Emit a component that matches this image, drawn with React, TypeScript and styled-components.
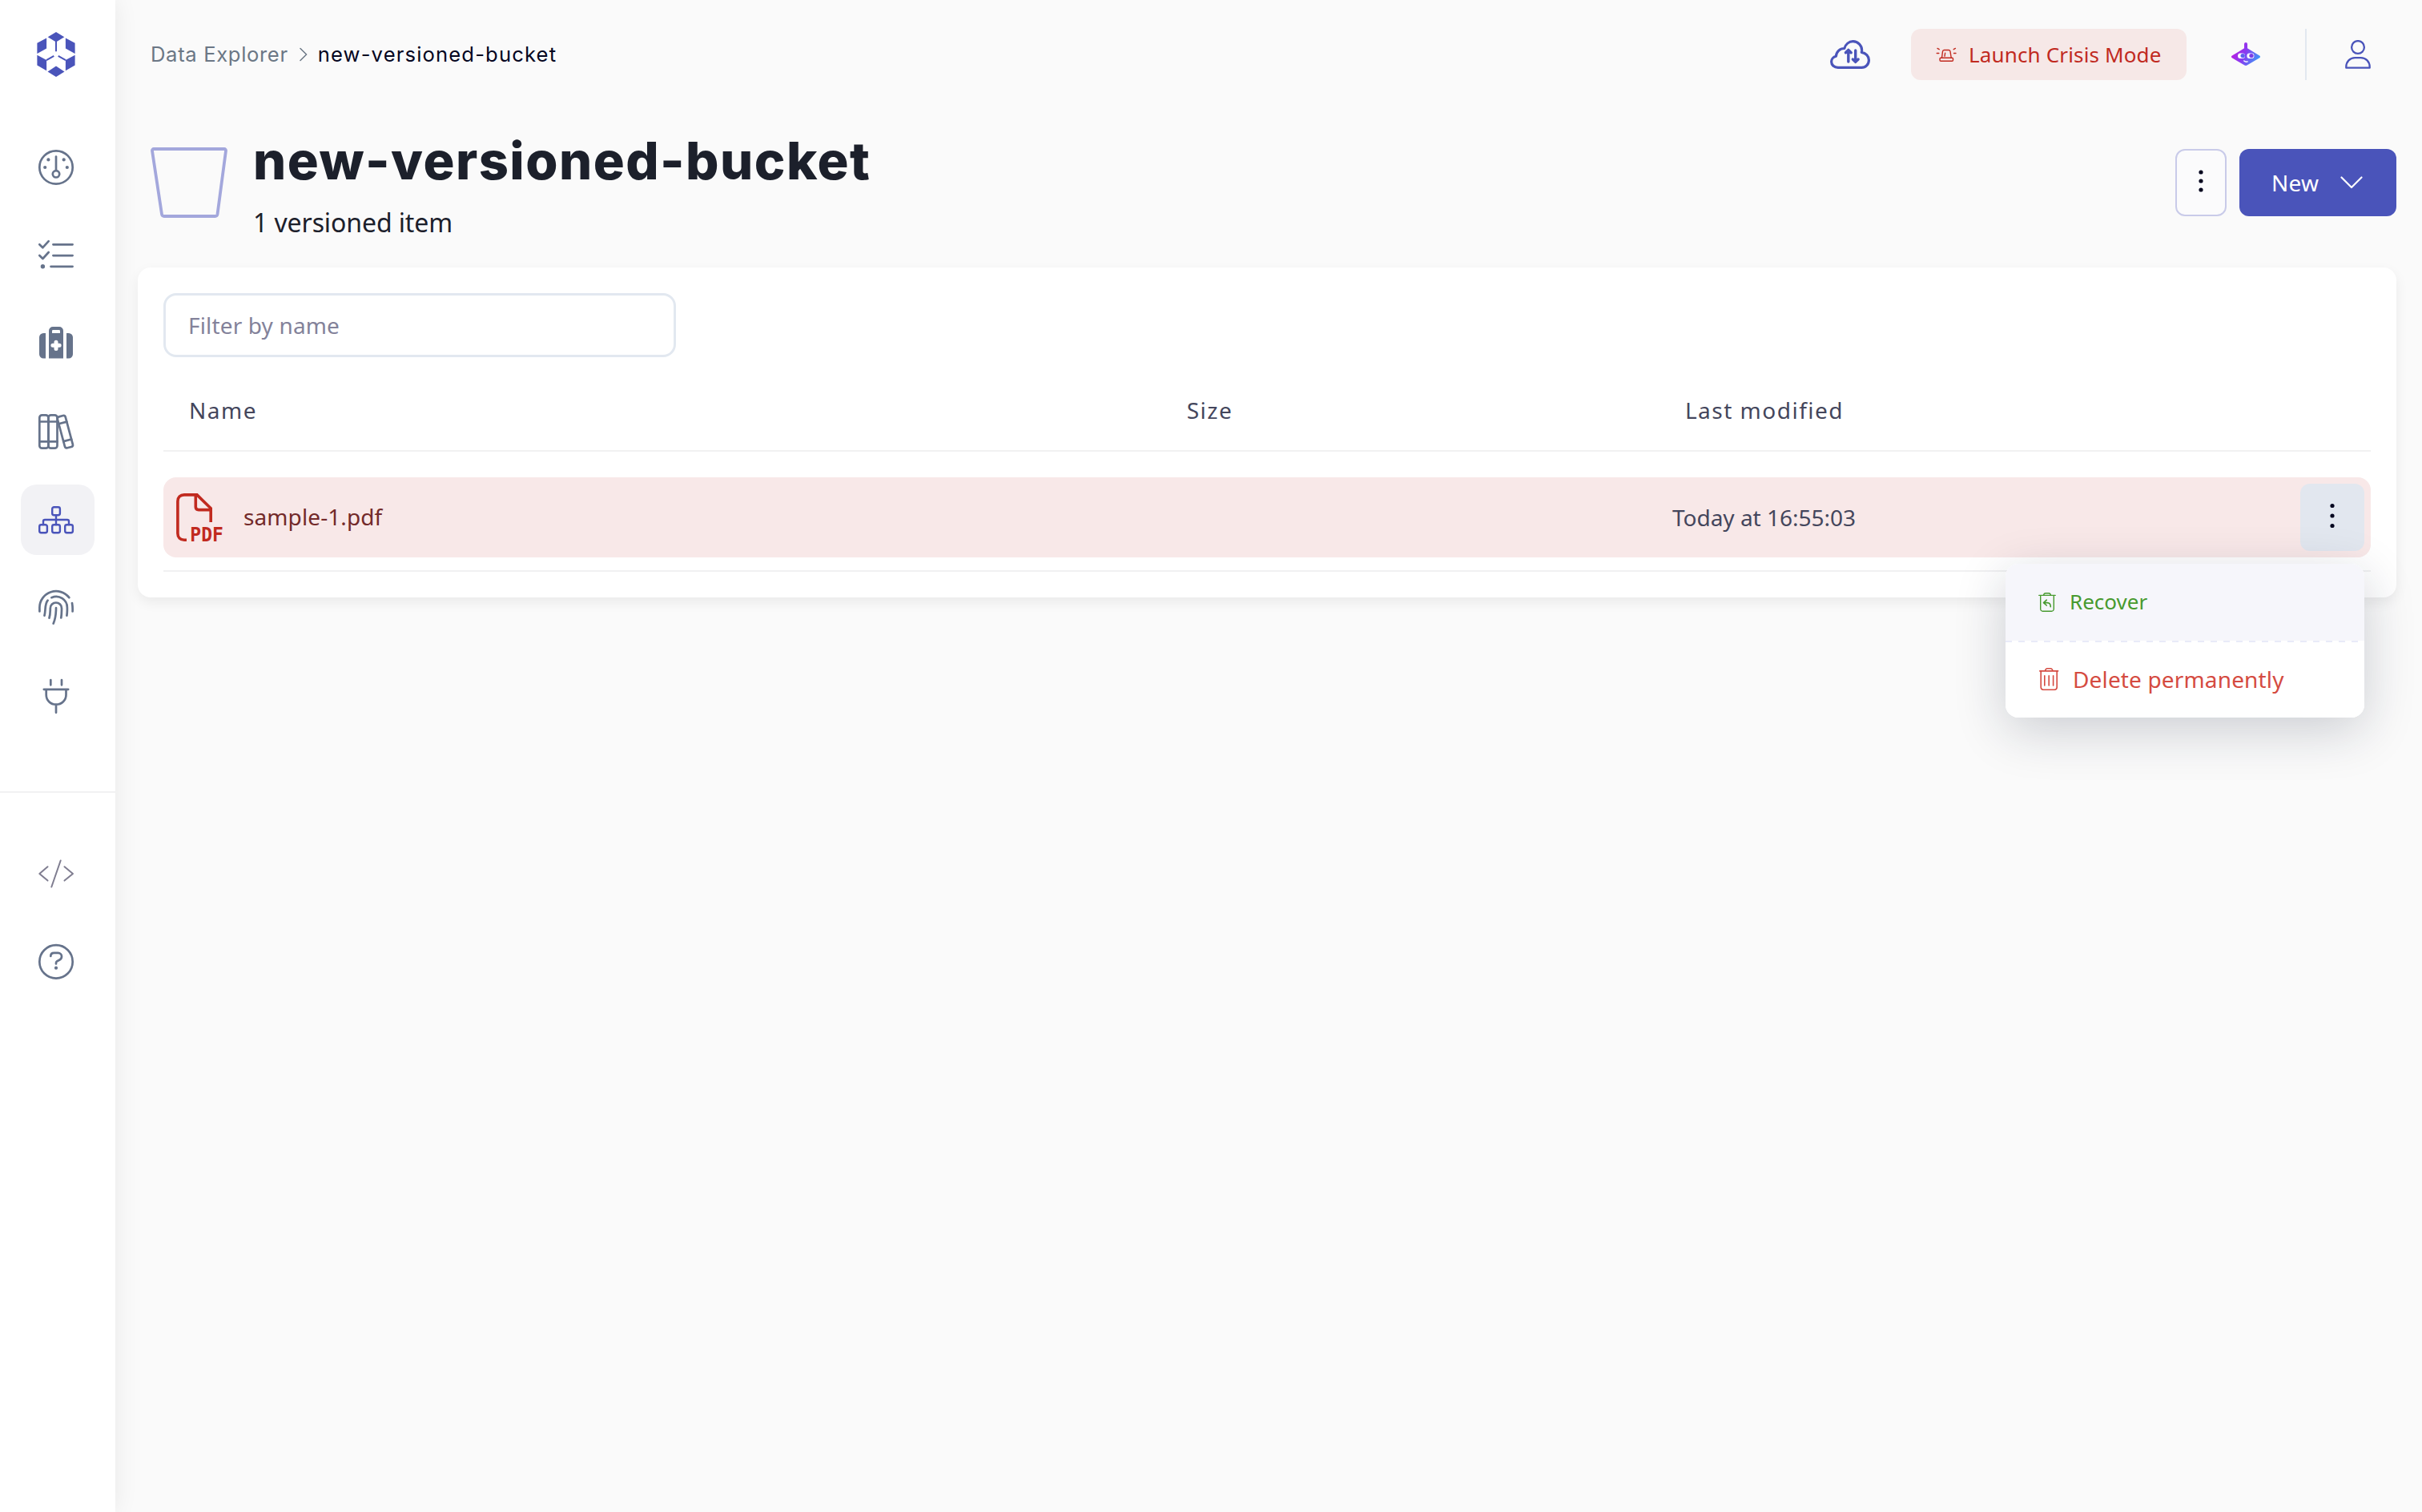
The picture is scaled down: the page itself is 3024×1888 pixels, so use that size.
import React from "react";
import styled, { createGlobalStyle, css } from "styled-components";

const GlobalStyle = createGlobalStyle`
  * { box-sizing: border-box; }
  body { margin: 0; background: #fafafa; }
  button { font: inherit; border: 0; padding: 0; margin: 0; background: none; cursor: pointer; }
`;

const body = `"Noto Sans", "Open Sans", sans-serif`;
const display = `Inter, "Open Sans", sans-serif`;
const indigo = "#4a54ba";
const slate = "#66738b";

const Shell = styled.div`
  display: flex;
  width: 3024px;
  height: 1888px;
  overflow: hidden;
  background: #fafafa;
  font-family: ${body};
  font-size: 28px;
  color: #44465c;
`;

const Sidebar = styled.nav`
  z-index: 1;
  flex: none;
  width: 144px;
  display: flex;
  flex-direction: column;
  background: #fff;
  box-shadow: 0 0 28px rgba(0, 0, 0, 0.075);
`;

const LogoLink = styled.div`
  height: 165px;
  padding: 40px 0 0 46px;
  svg { display: block; }
`;

const NavGroup = styled.div<{ $divided?: boolean }>`
  display: flex;
  flex-direction: column;
  gap: 22px;
  padding-left: 26px;
  ${(p) =>
    p.$divided &&
    css`
      margin-top: 75px;
      padding-top: 56px;
      border-top: 2px solid #f1f1f2;
    `}
`;

const NavItem = styled.button<{ $active?: boolean; $muted?: boolean }>`
  display: flex;
  align-items: center;
  justify-content: center;
  width: 92px;
  height: 88px;
  padding-right: 4px;
  border-radius: 20px;
  color: ${(p) => (p.$active ? indigo : p.$muted ? "#7f7d90" : slate)};
  background: ${(p) => (p.$active ? "#f2f2f5" : "transparent")};
`;

const Main = styled.main`
  flex: 1;
  min-width: 0;
  display: flex;
  flex-direction: column;
`;

const TopBar = styled.header`
  height: 136px;
  display: flex;
  align-items: center;
  padding: 0 64px 0 44px;
`;

const Crumbs = styled.div`
  flex: 1;
  display: flex;
  align-items: center;
  font-family: ${display};
  font-size: 25.6px;
  line-height: 36px;
  white-space: nowrap;
`;

const Crumb = styled.span<{ $current?: boolean }>`
  color: ${(p) => (p.$current ? "#05061f" : "#6b7785")};
  letter-spacing: ${(p) => (p.$current ? "1.15px" : "0.65px")};
`;

const CrumbArrow = styled.span`
  display: flex;
  width: 37px;
  padding-left: 14px;
`;

const CloudButton = styled.button`
  display: flex;
  margin-right: 51px;
  color: ${indigo};
`;

const CrisisButton = styled.button`
  display: flex;
  align-items: center;
  width: 344px;
  height: 64px;
  padding-left: 31px;
  gap: 15px;
  border-radius: 12px;
  background: #f6e8e7;
  color: #c12a1f;
  font-size: 26px;
  letter-spacing: 0.15px;
  white-space: nowrap;
`;

const AssistantButton = styled.button`
  display: flex;
  margin: 0 56px;
`;

const Separator = styled.div`
  width: 2px;
  height: 64px;
  margin-right: 48px;
  background: #e2e8f0;
`;

const UserButton = styled.button`
  display: flex;
  color: ${indigo};
`;

const PageHead = styled.section`
  display: flex;
  height: 198px;
  padding: 25px 32px 0 44px;
`;

const BucketMark = styled.div`
  width: 128px;
  padding-top: 23px;
`;

const Titles = styled.div`
  flex: 1;
`;

const Title = styled.h1`
  margin: 0;
  font-family: ${display};
  font-weight: 800;
  font-size: 65px;
  line-height: 80px;
  letter-spacing: 1.45px;
  color: #1c202b;
`;

const Subtitle = styled.p`
  margin: 13px 0 0 0;
  font-size: 32px;
  line-height: 48px;
  letter-spacing: -0.1px;
  color: #1c202b;
`;

const HeadActions = styled.div`
  display: flex;
  gap: 16px;
  padding-top: 25px;
`;

const MoreButton = styled.button`
  display: flex;
  align-items: center;
  justify-content: center;
  width: 64px;
  height: 84px;
  padding-bottom: 4px;
  border: 2px solid #c9cbe9;
  border-radius: 12px;
  background: #fbfbfc;
  color: #05061f;
`;

const NewButton = styled.button`
  display: flex;
  align-items: center;
  justify-content: space-between;
  width: 196px;
  height: 84px;
  padding: 0 42px 0 40px;
  border-radius: 12px;
  background: ${indigo};
  color: #fff;
  font-size: 28px;
  letter-spacing: 0.3px;
`;

const Card = styled.section`
  height: 412px;
  margin: 0 32px 0 28px;
  padding: 32px;
  border-radius: 16px;
  background: #fff;
  box-shadow: 0 6px 16px rgba(0, 0, 0, 0.065);
`;

const FilterInput = styled.input`
  display: block;
  width: 640px;
  height: 80px;
  padding: 0 28px;
  border: 3px solid #e2e8f0;
  border-radius: 16px;
  outline: none;
  background: #fff;
  font-family: ${body};
  font-size: 28px;
  letter-spacing: 0.15px;
  &::placeholder { color: #83829a; opacity: 1; }
`;

const columns = css`
  display: grid;
  grid-template-columns: 960px 692px 693px 1fr;
  align-items: center;
`;

const TableHead = styled.div`
  ${columns}
  height: 118px;
  padding-top: 16px;
  border-bottom: 2px solid #f1f1f2;
  letter-spacing: 1.5px;
  line-height: 40px;
`;

const HeadCell = styled.div<{ $center?: boolean }>`
  text-align: ${(p) => (p.$center ? "center" : "left")};
  padding-left: ${(p) => (p.$center ? "1px" : "32px")};
`;

const RowWrap = styled.div`
  padding: 32px 0 16px;
  border-bottom: 2px solid #f1f1f2;
`;

const Row = styled.div`
  ${columns}
  height: 100px;
  border-radius: 16px;
  background: #f8e8e8;
`;

const NameCell = styled.div`
  display: flex;
  align-items: center;
  gap: 24px;
  padding-left: 16px;
  letter-spacing: 0.1px;
  color: #732a2a;
`;

const FileName = styled.span`
  padding-bottom: 2px;
`;

const DateCell = styled.div`
  grid-column: 3;
  text-align: center;
`;

const ActionCell = styled.div`
  position: relative;
  grid-column: 4;
  justify-self: end;
  margin-right: 8px;
`;

const RowMenuButton = styled.button`
  display: flex;
  align-items: center;
  justify-content: center;
  width: 80px;
  height: 84px;
  padding-bottom: 4px;
  border-radius: 12px;
  background: #e2e7ef;
  color: #05061f;
`;

const Menu = styled.div`
  position: absolute;
  top: 100px;
  right: 0;
  width: 448px;
  border-radius: 16px;
  overflow: hidden;
  background: #fff;
`;

const MenuShadow = styled.div`
  position: absolute;
  top: 100px;
  right: 0;
  width: 448px;
  height: 192px;
  border-radius: 16px;
  box-shadow: 0 16px 64px rgba(20, 28, 56, 0.2);
`;

const MenuItem = styled.div<{ $danger?: boolean }>`
  display: flex;
  align-items: center;
  height: ${(p) => (p.$danger ? "94px" : "96px")};
  padding: 0 0 ${(p) => (p.$danger ? "2px" : "1px")} ${(p) => (p.$danger ? "42px" : "41px")};
  gap: ${(p) => (p.$danger ? "16px" : "17px")};
  font-size: ${(p) => (p.$danger ? "28px" : "26px")};
  letter-spacing: ${(p) => (p.$danger ? "0.15px" : "0")};
  color: ${(p) => (p.$danger ? "#d54b41" : "#479a2f")};
  background: ${(p) => (p.$danger ? "#fff" : "#f6f6fb")};
`;

const MenuLabel = styled.span`
  padding-bottom: 2px;
`;

const MenuDivider = styled.div`
  height: 2px;
  background: repeating-linear-gradient(90deg, #e9ebf8 0 8px, #fff 8px 16px);
`;

type IconProps = {
  w?: number;
  h?: number;
  sw?: number;
  fill?: string;
  children: React.ReactNode;
};

const Icon = ({ w = 48, h = 48, sw = 2.7, fill = "none", children }: IconProps) => (
  <svg
    width={w}
    height={h}
    viewBox={`0 0 ${w} ${h}`}
    fill={fill}
    stroke={fill === "none" ? "currentColor" : "none"}
    strokeWidth={sw}
    strokeLinecap="round"
    strokeLinejoin="round"
  >
    {children}
  </svg>
);

const Logo = () => (
  <svg width="48" height="56" viewBox="0 0 48 56" fill={indigo}>
    <path d="M24 0 34.3 6.2 24 12.6 13.7 6.2Z" />
    <path d="M12.1 7.6V20.6L.4 27V13.7Z" />
    <path d="M35.9 7.6V20.6L47.6 27V13.7Z" />
    <path d="M.4 28.7 12.1 35V48.2L.4 41.6Z" />
    <path d="M47.6 28.7 35.9 35V48.2L47.6 41.6Z" />
    <path d="M24 42.6 34.5 49.4 24 56 13.5 49.4Z" />
    <path d="M24 11V24.3M12 35.2 21.3 29.8M36 35.2 26.7 29.8" stroke={indigo} strokeWidth="2" />
  </svg>
);

const GaugeIcon = () => (
  <Icon>
    <circle cx="24" cy="24" r="20.7" />
    <circle cx="24" cy="32.3" r="4.2" />
    <path d="M24 10.5V27.5" />
    <g fill="currentColor" stroke="none">
      <circle cx="14.4" cy="14.4" r="2.1" />
      <circle cx="33.7" cy="14.4" r="2.1" />
      <circle cx="10.2" cy="24" r="2.1" />
      <circle cx="37.8" cy="24" r="2.1" />
    </g>
  </Icon>
);

const TasksIcon = () => (
  <Icon>
    <path d="M3.3 10.2 7.4 14.2 14.7 6.2M3.3 24 7.4 28 14.7 20M20.4 10.3H44.6M20.4 24.1H44.6M17.5 37.8H44.6" />
    <circle cx="7.4" cy="37.8" r="2.7" fill="currentColor" stroke="none" />
  </Icon>
);

const MedkitIcon = () => (
  <Icon fill="currentColor">
    <path d="M11 11V42.4H8.2A5.2 5.2 0 0 1 3 37.2V16.2A5.2 5.2 0 0 1 8.2 11Z" />
    <path d="M37 11V42.4H39.8A5.2 5.2 0 0 0 45 37.2V16.2A5.2 5.2 0 0 0 39.8 11Z" />
    <path
      fillRule="evenodd"
      d="M15 42.4V8A5 5 0 0 1 20 3H28A5 5 0 0 1 33 8V42.4ZM19 11H29V8.2A1.2 1.2 0 0 0 27.8 7H20.2A1.2 1.2 0 0 0 19 8.2Z"
    />
    <path d="M24 22.2V30.4M19.9 26.3H28.1" stroke="#fff" strokeWidth="5" />
  </Icon>
);

const BooksIcon = () => (
  <Icon>
    <rect x="3.3" y="3.3" width="11.1" height="41.4" rx="3.2" />
    <rect x="14.4" y="3.3" width="11.1" height="41.4" rx="3.2" />
    <path d="M3.3 11.5H25.5M3.3 36.4H25.5" />
    <g transform="rotate(-15 35.4 24.2)">
      <rect x="30.2" y="4" width="10.3" height="40.3" rx="2.6" />
      <path d="M30.2 12.5H40.5M30.2 35.2H40.5" />
    </g>
  </Icon>
);

const SitemapIcon = () => (
  <Icon sw={2.4}>
    <rect x="19.2" y="8.3" width="9.7" height="9.9" rx="2.2" />
    <rect x="3.2" y="30.3" width="9.7" height="9.9" rx="2.2" />
    <rect x="19.2" y="30.3" width="9.7" height="9.9" rx="2.2" />
    <rect x="35.2" y="30.3" width="9.7" height="9.9" rx="2.2" />
    <path d="M24 18.5V30M8 30V26A2 2 0 0 1 10 24H38A2 2 0 0 1 40 26V30" />
  </Icon>
);

const FingerprintIcon = () => (
  <Icon>
    <path d="M3.4 28.5V23.5A20.6 20.6 0 0 1 40.3 11.2" />
    <path d="M44 18C44.6 21.5 44.8 25 44.6 28.5" />
    <path d="M13.6 14.7C9.5 19.5 11.3 26.5 9.5 33.7" />
    <path d="M18.4 11.2C28 7 37.8 14 37.9 23.5C38 27.5 37.9 30.5 37.4 33.7" />
    <path d="M15.5 36.6C16.7 32.5 16.8 28 16.8 24.6A7.1 7.1 0 0 1 31 24.6C31 29 31 32.5 30.3 36.5" />
    <path d="M24 24C24 33 23.2 37.5 20.7 43.6" />
  </Icon>
);

const PlugIcon = () => (
  <Icon>
    <path d="M17.3 4V10.3M31 4V10.3M8.8 15.8H39.2M11.7 16V22.5C11.7 29.5 17 34.7 24 34.7S36.5 29.5 36.5 22.5V16M24 35V44.8" />
  </Icon>
);

const CodeIcon = () => (
  <Icon sw={2}>
    <path d="M13.5 16.2 3.3 24.9 13.5 33.6M34.5 16.2 45 24.9 34.5 33.6M29.7 8.5 18.3 41.5" />
  </Icon>
);

const HelpIcon = () => (
  <Icon>
    <g transform="translate(0 0.9)">
      <circle cx="24" cy="24" r="20.7" />
      <path d="M17.3 17C17.3 14.4 19.1 13 21.5 13H26.5C29 13 31 14.8 31 17.3C31 19.5 30 20.8 28.5 21.6L25.3 23.3C24.3 23.9 24 24.5 24 25.4V26.6" />
      <circle cx="24" cy="31.8" r="2.1" fill="currentColor" stroke="none" />
    </g>
  </Icon>
);

const CloudIcon = () => (
  <Icon w={50} h={36} sw={3.2}>
    <path d="M9.8 34.4C5.2 34.4 1.6 31.3 1.6 27C1.6 23.8 4 21 7.4 20.2C7.6 14.8 12 10.4 17.8 10.5C19.3 5.2 23.5 1.7 28.5 1.7C34.8 1.7 40 6.8 39.6 13.2L39.3 15.3C44.5 16 48.4 20 48.4 25C48.4 30.4 44.5 34.4 39.4 34.4Z" />
    <path
      d="M22.8 27V13.5M19.4 15.8 22.8 12.4 26.2 15.8M31.7 13V26.5M28.3 24 31.7 27.4 35.1 24"
      strokeWidth="3.4"
    />
  </Icon>
);

const SirenIcon = () => (
  <Icon w={26} h={22} sw={1.4}>
    <rect x="5" y="15.3" width="16.5" height="4" rx="1.2" />
    <path d="M7.5 15 8.5 7.3A2 2 0 0 1 10.4 5.5H16.1A2 2 0 0 1 18 7.3L19.2 15M11 13.2 11.6 9.3M2 3.4 4.2 4.7M1.2 9.5H3.8M24.4 3.4 22.2 4.7M25 9.5H22.5" />
  </Icon>
);

const RobotIcon = () => (
  <svg width="36" height="30" viewBox="0 0 36 30">
    <defs>
      <linearGradient id="robot" x1="0" y1="0.3" x2="1" y2="0.7">
        <stop offset="0" stopColor="#c31bdf" />
        <stop offset="0.45" stopColor="#8a3af0" />
        <stop offset="1" stopColor="#3b9cf8" />
      </linearGradient>
    </defs>
    <path
      fill="url(#robot)"
      d="M16 2A2 2 0 0 1 20 2V7.3L35.2 16.6A1.6 1.6 0 0 1 35.2 19.2L19.5 28.5A3 3 0 0 1 16.5 28.5L.8 19.2A1.6 1.6 0 0 1 .8 16.6L16 7.3Z"
    />
    <rect x="8" y="13.6" width="9" height="6.4" rx="3" fill="#fff" />
    <rect x="19.4" y="13.6" width="9" height="6.4" rx="3" fill="#fff" />
    <circle cx="14.2" cy="16.6" r="2.7" fill="#5a62ee" />
    <circle cx="25" cy="16.6" r="2.7" fill="#7a3fe6" />
    <path d="M15.8 23Q18 24.9 20.2 23.9" fill="none" stroke="#fff" strokeWidth="1.4" strokeLinecap="round" />
  </svg>
);

const UserIcon = () => (
  <Icon w={32} h={36} sw={2.3}>
    <circle cx="16" cy="9" r="7.9" />
    <path d="M1.3 34.7V33.5C1.3 27 6 22.2 12.3 22.2H19.7C26 22.2 30.7 27 30.7 33.5V34.7Z" />
  </Icon>
);

const Dots = ({ step }: { step: number }) => (
  <svg width="8" height="32" viewBox="0 0 8 32" fill="currentColor">
    <circle cx="4" cy={16 - step} r="2.6" />
    <circle cx="4" cy="16" r="2.6" />
    <circle cx="4" cy={16 + step} r="2.6" />
  </svg>
);

const PdfSvg = styled.svg`
  flex: none;
  overflow: visible;
  text {
    font-family: "DejaVu Sans Mono", monospace;
    font-weight: 700;
    font-size: 25px;
    letter-spacing: 0;
  }
`;

const PdfIcon = () => (
  <PdfSvg width="60" height="60" viewBox="0 0 60 60" fill="none" stroke="#c12a1f" strokeWidth="3.6">
    <path d="M13 58.2H10C5 58.2 1.9 55 1.9 50V10C1.9 5 5 1.9 10 1.9H26L43.2 18.8V36" />
    <path d="M24.3 2V17C24.3 19.5 25.8 20.6 28 20.6H43" />
    <text x="17.3" y="59.6" fill="#c12a1f" stroke="none" textLength="41.5" lengthAdjust="spacingAndGlyphs">
      PDF
    </text>
  </PdfSvg>
);

const RecoverIcon = () => (
  <Icon w={22} h={24} sw={1.4}>
    <path d="M.8 3.4H21.2M6.5 3.2C6.9 1.5 7.7 .8 9 .8H13C14.3 .8 15.1 1.5 15.5 3.2M2.7 3.6V20.4A2.7 2.7 0 0 0 5.4 23.2H16.6A2.7 2.7 0 0 0 19.3 20.4V3.6" />
    <path d="M10.3 9.2 6.5 12.6 10.3 16M6.7 12.6H11C14 12.6 15.3 14.5 15.3 17.8" strokeWidth="1.6" />
  </Icon>
);

const TrashIcon = () => (
  <Icon w={26} h={28} sw={1.6}>
    <path d="M.8 3.9H23.6M7.5 3.7C7.9 1.6 8.8 .8 10.2 .8H14.2C15.6 .8 16.5 1.6 16.9 3.7M2.2 4V24.3A3 3 0 0 0 5.2 27.2H19.2A3 3 0 0 0 22.2 24.3V4M6.8 9.7V22M12.2 9.7V22M17.6 9.7V22" />
  </Icon>
);

export default function App() {
  return (
    <>
      <GlobalStyle />
      <Shell>
        <Sidebar>
          <LogoLink>
            <Logo />
          </LogoLink>
          <NavGroup>
            <NavItem><GaugeIcon /></NavItem>
            <NavItem><TasksIcon /></NavItem>
            <NavItem><MedkitIcon /></NavItem>
            <NavItem><BooksIcon /></NavItem>
            <NavItem $active><SitemapIcon /></NavItem>
            <NavItem><FingerprintIcon /></NavItem>
            <NavItem><PlugIcon /></NavItem>
          </NavGroup>
          <NavGroup $divided>
            <NavItem $muted><CodeIcon /></NavItem>
            <NavItem><HelpIcon /></NavItem>
          </NavGroup>
        </Sidebar>
        <Main>
          <TopBar>
            <Crumbs>
              <Crumb>Data Explorer</Crumb>
              <CrumbArrow>
                <Icon w={10} h={18} sw={1.5}>
                  <path d="M1 1.5 8.6 9 1 16.5" stroke="#6b7785" />
                </Icon>
              </CrumbArrow>
              <Crumb $current>new-versioned-bucket</Crumb>
            </Crumbs>
            <CloudButton><CloudIcon /></CloudButton>
            <CrisisButton>
              <SirenIcon />
              Launch Crisis Mode
            </CrisisButton>
            <AssistantButton><RobotIcon /></AssistantButton>
            <Separator />
            <UserButton><UserIcon /></UserButton>
          </TopBar>
          <PageHead>
            <BucketMark>
              <svg
                width="96"
                height="88"
                viewBox="0 0 96 88"
                fill="none"
                stroke="#a3a7dc"
                strokeWidth="3.8"
                strokeLinejoin="round"
              >
                <path d="M4 2H92A2 2 0 0 1 94 4.3L83.5 83.5A3 3 0 0 1 80.5 86H17A3 3 0 0 1 14 83.5L2 4.3A2 2 0 0 1 4 2Z" />
              </svg>
            </BucketMark>
            <Titles>
              <Title>new-versioned-bucket</Title>
              <Subtitle>1 versioned item</Subtitle>
            </Titles>
            <HeadActions>
              <MoreButton><Dots step={11} /></MoreButton>
              <NewButton>
                New
                <Icon w={28} h={16} sw={2.2}>
                  <path d="M1.5 1.5 14 14 26.5 1.5" />
                </Icon>
              </NewButton>
            </HeadActions>
          </PageHead>
          <Card>
            <FilterInput placeholder="Filter by name" />
            <TableHead>
              <HeadCell>Name</HeadCell>
              <HeadCell $center>Size</HeadCell>
              <HeadCell $center>Last modified</HeadCell>
            </TableHead>
            <RowWrap>
              <Row>
                <NameCell>
                  <PdfIcon />
                  <FileName>sample-1.pdf</FileName>
                </NameCell>
                <DateCell>Today at 16:55:03</DateCell>
                <ActionCell>
                  <MenuShadow />
                  <RowMenuButton><Dots step={12.5} /></RowMenuButton>
                  <Menu>
                    <MenuItem>
                      <RecoverIcon />
                      <MenuLabel>Recover</MenuLabel>
                    </MenuItem>
                    <MenuDivider />
                    <MenuItem $danger>
                      <TrashIcon />
                      Delete permanently
                    </MenuItem>
                  </Menu>
                </ActionCell>
              </Row>
            </RowWrap>
          </Card>
        </Main>
      </Shell>
    </>
  );
}
